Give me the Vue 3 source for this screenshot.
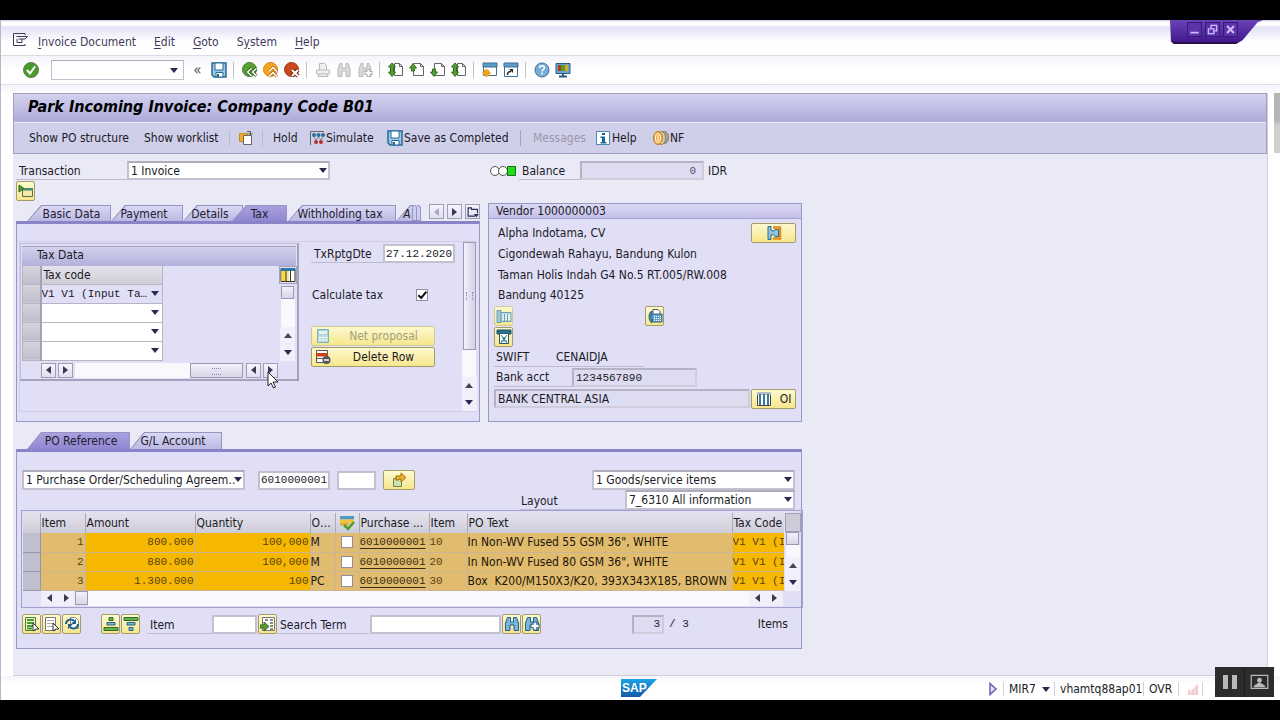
<script setup>
import { h, ref } from 'vue'

const art = {
  exit: '<path d="M12 3V1.500H.5v12H12V12" fill="none" stroke="#3c3950"/><path d="M3.500 4.500h11L12 7H5.500M4 7v3.500h5V7" fill="none" stroke="#3c3950"/>',
  ok: '<circle cx="8" cy="8" r="7.500" fill="#4d9a2c" stroke="#5e7a52"/><path d="M4 8l3 3.500L12 4.500" fill="none" stroke="#fff" stroke-width="2"/>',
  save: '<path d="M1 1h14v14H3l-2-2z" fill="#9cc6e4" stroke="#2a6a98" stroke-width="1.500"/><path d="M4 1h8v7H4z" fill="#fff" stroke="#2a6a98"/><path d="M5 10.500h7V15H5z" fill="#fff" stroke="#2a6a98"/><path d="M6 12h2v3H6z" fill="#2a6a98"/>',
  back: '<circle cx="7.500" cy="7.500" r="7" fill="#57a032" stroke="#467d2c"/><path d="M9.500 6.500l-4 3.500 4 4M14.500 6.500l-4 3.500 4 4" fill="none" stroke="#326020" stroke-width="3"/><path d="M9.500 6.500l-4 3.500 4 4M14.500 6.500l-4 3.500 4 4" fill="none" stroke="#fff" stroke-width="1.500"/>',
  up: '<circle cx="7.500" cy="7.500" r="7" fill="#f6a51c" stroke="#d0861c"/><path d="M6 9.500l4-4 4 4M6 14.500l4-4 4 4" fill="none" stroke="#b56a10" stroke-width="3"/><path d="M6 9.500l4-4 4 4M6 14.500l4-4 4 4" fill="none" stroke="#fff" stroke-width="1.500"/>',
  cancel: '<circle cx="7.500" cy="7.500" r="7" fill="#c9481c" stroke="#9c3d1e"/><path d="M8 8l6 6M14 8l-6 6" stroke="#7a260e" stroke-width="4"/><path d="M8 8l6 6M14 8l-6 6" stroke="#fff" stroke-width="2"/>',
  print: '<path d="M4.500 8V1.500h5l2 2V8M1.500 8h13v4h-13zM4 12l-1 2.500h10L12 12" fill="#f0f0f0" stroke="#b9b9b9"/>',
  findOff: '<path d="M2 14.500V7l2-5.500h2V6h4V1.500h2L14 7v7.500h-4V9H6v5.500z" fill="#d9d9d9" stroke="#b9b9b9"/>',
  findMoreOff: '<path d="M2 14.500V7l2-5.500h2V6h4V1.500h2L14 7v7.500h-4V9H6v5.500z" fill="#d9d9d9" stroke="#b9b9b9"/><path d="M11.500 7v8M7.500 11h8" stroke="#b0b0b0" stroke-width="4"/><path d="M11.500 8v6M8.500 11h6" stroke="#fff" stroke-width="2"/>',
  pageFirst: '<path d="M6.500 1.500h5l3 3v9h-8zM11.500 1.500v3h3" fill="#fff" stroke="#666"/><path d="M4 1l3.500 4H5.500v5h2L4 14.500.5 10h2V5h-2z" fill="#55a032" stroke="#346d20"/>',
  pagePrev: '<path d="M4.500 1.500h7l3 3v9h-10zM11.500 1.500v3h3" fill="#fff" stroke="#666"/><path d="M.5 6L4 1.500 7.500 6h-2v3h-3V6z" fill="#55a032" stroke="#346d20"/>',
  pageNext: '<path d="M4.500 1.500h7l3 3v9h-10zM11.500 1.500v3h3" fill="#fff" stroke="#666"/><path d="M.5 10L4 14.500 7.500 10h-2V7h-3v3z" fill="#55a032" stroke="#346d20"/>',
  session: '<path d="M1.500 1.500h13v12h-13z" fill="#fff" stroke="#3d6f96"/><path d="M1 1h14v4H1z" fill="#5d9cc8" stroke="#3d6f96"/><path d="M4.500 7v8M.5 11h8M2 8.500l5 5M7 8.500l-5 5" stroke="#f0a020" stroke-width="2"/>',
  shortcut: '<path d="M1.500 1.500h13v13h-13z" fill="#fff" stroke="#3d6f96"/><path d="M1 1h14v4H1z" fill="#5d9cc8" stroke="#3d6f96"/><path d="M4.500 13c0-3 1-3.500 3.500-3.500" fill="none" stroke="#222" stroke-width="1.500"/><path d="M6 7h4v4z" fill="#222"/>',
  help: '<circle cx="8" cy="8" r="7" fill="#78aed6" stroke="#3d6f96"/><path d="M5.500 6c0-3 5-3 5 0 0 1.500-2.500 1.500-2.500 3.500M8 10.500v2" fill="none" stroke="#fff" stroke-width="1.500"/>',
  monitor: '<path d="M1 1.500h14v10H1z" fill="#69a5cc" stroke="#2b5d84"/><path d="M3 3h3v6H3z" fill="#c43020"/><path d="M6 3h4v6H6z" fill="#4aa02c"/><path d="M10 3h3v6h-3z" fill="#e8a31c"/><path d="M8 12v2M4 14.500h8" stroke="#2b5d84" stroke-width="2"/>',
  otherDoc: '<path d="M1.500 3.500h8v8h-8z" fill="#f2ab22" stroke="#c78a1c"/><path d="M5.500 5.500h8v9h-8z" fill="#fff" stroke="#666"/><path d="M9 1.500h3.500V5M10.500 3l2 2 2-2" fill="none" stroke="#555"/>',
  simulate: '<path d="M1.500 15V1.500H15" fill="none" stroke="#666"/><g fill="#2b7098"><circle cx="5" cy="5" r="2"/><circle cx="9.500" cy="5" r="2"/><circle cx="14" cy="5" r="2"/></g><g fill="#b93226"><circle cx="7" cy="12" r="2"/><circle cx="12" cy="12" r="2"/></g><path d="M5 7l2 3 2.500-3M9.500 7l2.500 3 2-3" fill="none" stroke="#888"/>',
  info: '<path d="M1.500 1.500h13v13h-13z" fill="#fff" stroke="#4b89b5"/><path d="M7 3h3v2H7zM5.500 6.500H10V12h1.500v1.500h-6V12H7V8H5.500z" fill="#1b6597"/>',
  coins: '<ellipse cx="11.500" cy="7.500" rx="4" ry="6" fill="#a8a49a" stroke="#77736a"/><ellipse cx="8.500" cy="8" rx="4" ry="6.500" fill="#d9cfae" stroke="#8d7c4c"/><ellipse cx="5" cy="8" rx="4.500" ry="6.500" fill="#f3a93a" stroke="#c07f1c"/><ellipse cx="5" cy="8" rx="2.500" ry="4.500" fill="none" stroke="#fff"/><path d="M5 5v6" stroke="#fff"/>',
  lights: '<g stroke="#555" fill="#fff"><circle cx="5" cy="8" r="4.500"/><circle cx="13" cy="8" r="4.500"/></g><path d="M17.500 3.500h8v9h-8z" fill="#1be01b" stroke="#1c6a1c"/>',
  headerOpen: '<path d="M4.500 5.500h10v8h-10z" fill="#f4e9a8" stroke="#58704c"/><path d="M4 5h11v2.500H4z" fill="#46896f"/><path d="M1 2l5 3.500L1 9z" fill="#4f9a2e" stroke="#2e6b1c"/>',
  tabList: '<path d="M11 13.500H1.500v-11H6v2h8v5" fill="none" stroke="#2d2a55" stroke-width="1.500"/><path d="M9 10.500h7L12.500 15z" fill="#2d2a55"/>',
  config: '<path d="M1 1.500h14v13H1z" fill="#fff" stroke="#333"/><path d="M1.500 4H6v10H1.500z" fill="#ffd83c"/><path d="M6 4h3v10H6z" fill="#f4e58a"/><path d="M1 1h14v3H1z" fill="#2b78a5"/><path d="M6 4v10M10.500 4v10" stroke="#333"/>',
  calc: '<path d="M2.500 1.500h11v13h-11z" fill="#a9d0d8" stroke="#7eb0bd"/><path d="M4 3h8v3H4z" fill="#e9f6ee"/><path d="M5 7v7M8 7v7M11 7v7M3 9.500h10M3 12h10" stroke="#e9f6ee"/>',
  deleteRow: '<path d="M1.500 1.500h11v12h-11zM1 9.500h12" fill="#fff" stroke="#555"/><path d="M1 4h12v3.500H1z" fill="#c9431c"/><circle cx="11.500" cy="11" r="4" fill="#55565a"/><path d="M9 11h5" stroke="#fff" stroke-width="1.500"/>',
  relation: '<path d="M7 2.500h7v11H7" fill="none" stroke="#e28a1c" stroke-width="2.500"/><path d="M2 1.500h3v4l3 .5 1-1.500h3.500v7H9L7.500 9.500 5 10v4.500H2z" fill="#8ec3df" stroke="#2f6d92"/>',
  phone: '<path d="M1 2.500h4v12H1z" fill="#9ccbd8" stroke="#6d9eaf"/><path d="M5 4.500h10v9H5z" fill="#c2e0e6" stroke="#6d9eaf"/><path d="M7 7.500h7M7 9.500h7M7 11.500h7" stroke="#fff"/><path d="M8.500 6v7M11.500 6v7" stroke="#6d9eaf"/>',
  fax: '<path d="M6 6V1.500h5l2 2V6" fill="#fff" stroke="#555"/><path d="M4 6h11v8H6z" fill="#6ba5c9" stroke="#2c6285"/><path d="M5 3c-4 1-4 10 0 12V12c-2-2-2-4 0-6z" fill="#4f8fb8" stroke="#2c6285"/><path d="M7 8.500h7M7 10.500h7M7 12.500h7" stroke="#fff" stroke-dasharray="1 1"/>',
  bank: '<path d="M1 1h14v4H1z" fill="#2a7285" stroke="#184f60"/><path d="M3.500 4.500h9V14.500h-9z" fill="#fff" stroke="#27596d"/><path d="M5 6l6 8M11 6l-6 8M5 12h6" stroke="#3b8196"/><circle cx="8" cy="9.500" r="1.500" fill="#3b8196"/>',
  columns: '<path d="M1.500 1.500h13v13h-13z" fill="#fff" stroke="#444"/><path d="M1 1h14v3H1z" fill="#b5bcc4"/><path d="M4 3v11M8 3v11M12 3v11" stroke="#397a9c" stroke-width="2"/>',
  transfer: '<path d="M2.500 6.500h8v8h-8z" fill="#cfe0b0" stroke="#6d7d58"/><path d="M5 8V4h5V1l5 4.500L10 10V7H8v1z" fill="#f2b02c" stroke="#9b6d15"/>',
  rowsCheck: '<path d="M1 1h14v3.500H1z" fill="#4f99c4"/><path d="M1 4.500h14V8H1z" fill="#f2c33c"/><path d="M1 8h9v2.500H1z" fill="#d8b040"/><path d="M5 10l4 4 6-7" fill="none" stroke="#4e9b2e" stroke-width="2.500"/>',
  selectAll: '<path d="M1.500 1.500h10v13h-10z" fill="#e9f4d8" stroke="#4e7d3a"/><path d="M3 4h7M3 7h7M3 10h7M3 12.500h5" stroke="#4b9a2e" stroke-width="2"/><path d="M9 7l6 6h-3l-3 2z" fill="#fff" stroke="#333"/>',
  deselect: '<path d="M1.500 1.500h10v13h-10z" fill="#fff" stroke="#777"/><path d="M3 4.500h7M3 7.500h7M3 10.500h7" stroke="#aaa"/><path d="M9 7l6 6h-3l-3 2z" fill="#fff" stroke="#333"/>',
  refresh: '<path d="M6.500 1.500h5l3 3v8h-8z" fill="#fff" stroke="#888"/><path d="M2 8c0-4 5-6 8-3M14 8c0 4-5 6-8 3" fill="none" stroke="#235f8d" stroke-width="2"/><path d="M12 3v5H7zM4 13V8h5z" fill="#235f8d"/>',
  sortUp: '<path d="M6 1.500h4v3H6z" fill="#66b04a" stroke="#2e6c2c"/><path d="M4 6.500h8v2.500H4z" fill="#7cb6cf" stroke="#2c6285"/><path d="M1 11.500h14v3H1z" fill="#66b04a" stroke="#2e6c2c"/>',
  sortDown: '<path d="M1 1.500h14v3H1z" fill="#66b04a" stroke="#2e6c2c"/><path d="M4 6.500h8v2.500H4z" fill="#7cb6cf" stroke="#2c6285"/><path d="M6 11.500h4v3H6z" fill="#7cb6cf" stroke="#2c6285"/>',
  position: '<path d="M2.500 1.500h12v13h-12z" fill="#fff" stroke="#777"/><path d="M5 4h3M10 4h3M10 7h3M10 10h3M10 13h3" stroke="#666" stroke-width="1.500"/><path d="M0 9h4V6l5 4.500L4 15v-3H0z" fill="#55a032" stroke="#346d20"/>',
  find: '<path d="M1.500 14.500V7l2-5.500h3V6h3V1.500h3l2 5.500v7.500H10V9H6v5.500z" fill="#79b5dc" stroke="#235f8d"/>',
  findMore: '<path d="M1.500 14.500V7l2-5.500h3V6h3V1.500h3l2 5.500v7.500H10V9H6v5.500z" fill="#79b5dc" stroke="#235f8d"/><path d="M11 5.500v9M6.500 10h9" stroke="#235f8d" stroke-width="4.500"/><path d="M11 6.500v7M7.500 10h7" stroke="#fff" stroke-width="2.500"/>',
  play: '<path d="M5 2.500v11L11 8z" fill="#e4e0fa" stroke="#6a5fb8" stroke-width="1.500"/>',
  signal: '<path d="M3 14L14 2v12z" fill="#f5dade"/><path d="M5 14V8M9 14V9M13 14V5" stroke="#edb8be"/>',
  minimize: '<path d="M2 12.500h12" stroke="#cdbcff" stroke-width="2.500"/>',
  restore: '<path d="M2 7h8v7H2z" fill="none" stroke="#cdbcff" stroke-width="2"/><path d="M6 6V2h8v8h-3" fill="none" stroke="#cdbcff" stroke-width="2"/>',
  close: '<path d="M3 3l10 10M13 3L3 13" stroke="#cdbcff" stroke-width="3"/>',
  person: '<path d="M1 2h14v11H1z" fill="none" stroke="#bbb"/><circle cx="8" cy="6" r="2" fill="#bbb"/><path d="M3 12c1-3 3-2 4-4h2c1 2 3 1 4 4z" fill="#bbb"/>',
}

const Ico = (props) =>
  h('svg', {
    viewBox: props.wide ? '0 0 27 16' : '0 0 16 16',
    width: props.wide ? 27 : 16,
    height: 16,
    'aria-hidden': 'true',
    innerHTML: art[props.name],
  })
Ico.props = { name: String, wide: Boolean }

const menus = ['Invoice Document', 'Edit', 'Goto', 'System', 'Help'].map((t) => {
  const i = t === 'System' ? 1 : 0
  return { pre: t.slice(0, i), key: t[i], post: t.slice(i + 1), name: t }
})
const tools = [
  ['save'],
  ['back', 'up', 'cancel'],
  ['print', 'findOff', 'findMoreOff'],
  ['pageFirst', 'pagePrev', 'pageNext', 'pageFirst'],
  ['session', 'shortcut'],
  ['help', 'monitor'],
]
const tabs = [
  { t: 'Basic Data', c: 'w84' },
  { t: 'Payment', c: 'w72' },
  { t: 'Details', c: 'w60' },
  { t: 'Tax', c: 'w55' },
  { t: 'Withholding tax', c: 'w108' },
]
const tab = ref('Tax')
const address = [
  'Alpha Indotama, CV',
  'Cigondewah Rahayu, Bandung Kulon',
  'Taman Holis Indah G4 No.5 RT.005/RW.008',
  'Bandung 40125',
]
const items = [
  { n: 1, amount: '800.000', qty: '100,000', u: 'M', po: '6010000001', line: '10', text: 'In Non-WV Fused 55 GSM 36", WHITE' },
  { n: 2, amount: '880.000', qty: '100,000', u: 'M', po: '6010000001', line: '20', text: 'In Non-WV Fused 80 GSM 36", WHITE' },
  { n: 3, amount: '1.300.000', qty: '100', u: 'PC', po: '6010000001', line: '30', text: 'Box  K200/M150X3/K20, 393X343X185, BROWN' },
]
</script>

<template>
  <div class="screen">
    <div class="window">
      <div class="caption">
        <button aria-label="Minimize"><Ico name="minimize" /></button>
        <button aria-label="Restore"><Ico name="restore" /></button>
        <button aria-label="Close"><Ico name="close" /></button>
      </div>

      <nav class="menubar">
        <button class="flat sysmenu" aria-label="System menu"><Ico name="exit" /></button>
        <button v-for="m in menus" :key="m.name" class="flat menu">{{ m.pre }}<u>{{ m.key }}</u>{{ m.post }}</button>
      </nav>

      <div class="toolbar">
        <button class="flat" aria-label="Enter"><Ico name="ok" /></button>
        <span class="combo command"><input aria-label="Command" /><i class="tri down"></i></span>
        <button class="flat chevrons" aria-label="Hide command field">«</button>
        <div v-for="(g, i) in tools" :key="i" class="group">
          <button v-for="(n, j) in g" :key="j" class="flat" :aria-label="n"><Ico :name="n" /></button>
        </div>
      </div>

      <div class="body">
        <main class="frame">
          <header class="head">
            <h1>Park Incoming Invoice: Company Code B01</h1>
            <div class="appbar">
              <button class="flat a1">Show PO structure</button>
              <button class="flat a2">Show worklist</button>
              <button class="flat a3" aria-label="Other document"><Ico name="otherDoc" /></button>
              <button class="flat a4">Hold</button>
              <button class="flat a5"><Ico name="simulate" />Simulate</button>
              <button class="flat a6"><Ico name="save" />Save as Completed</button>
              <button class="flat a7" disabled>Messages</button>
              <button class="flat a8"><Ico name="info" />Help</button>
              <button class="flat"><Ico name="coins" />NF</button>
            </div>
          </header>

          <div class="content">
            <div class="transaction">
              <label for="trx" class="ul trx">Transaction</label>
              <span class="combo trxsel"><select id="trx"><option>1 Invoice</option></select><i class="tri down"></i></span>
              <Ico name="lights" wide class="lights" />
              <label for="bal" class="ul bal">Balance</label>
              <input id="bal" class="ro mono right balval" value="0" readonly />
              <span>IDR</span>
            </div>
            <button class="gold sq" aria-label="Open header"><Ico name="headerOpen" /></button>

            <div class="top">
              <section class="left">
                <div class="tabs">
                  <button v-for="t in tabs" :key="t.t" class="tab" :class="[t.c, { on: tab === t.t }]" @click="tab = t.t">
                    <span>{{ t.t }}</span>
                  </button>
                  <button class="tab w17" aria-label="Amount split"><span><em>A</em></span></button>
                  <i class="stack"></i><i class="stack"></i>
                  <div class="tabnav">
                    <button class="box" disabled aria-label="Previous tab"><i class="tri prev dim"></i></button>
                    <button class="box" aria-label="Next tab"><i class="tri next"></i></button>
                    <button class="box" aria-label="Tab list"><Ico name="tabList" /></button>
                  </div>
                </div>
                <div class="panel taxpanel">
                  <div class="inner">
                    <div class="taxbox">
                      <h2>Tax Data</h2>
                      <div class="taxgrid">
                        <table>
                          <thead>
                            <tr><th class="sel"></th><th>Tax code</th></tr>
                          </thead>
                          <tbody>
                            <tr v-for="n in 4" :key="n">
                              <td class="sel"></td>
                              <td :class="{ filled: n === 1 }">
                                <span class="cellsel"><select :aria-label="'Tax code ' + n"><option>{{ n === 1 ? 'V1 V1 (Input Ta…' : '' }}</option></select><i class="tri down"></i></span>
                              </td>
                            </tr>
                          </tbody>
                        </table>
                        <div class="vs">
                          <button class="cfg" aria-label="Configure table"><Ico name="config" /></button>
                          <i class="thumb"></i><i class="track"></i>
                          <button class="arr" aria-label="Scroll up"><i class="tri up"></i></button>
                          <button class="arr" aria-label="Scroll down"><i class="tri down"></i></button>
                        </div>
                      </div>
                      <div class="hs">
                        <button class="box" aria-label="First column"><i class="tri prev"></i></button>
                        <button class="box" aria-label="Right one column"><i class="tri next"></i></button>
                        <i class="track"></i><i class="thumb grip"></i>
                        <button class="box" aria-label="Left one column"><i class="tri prev"></i></button>
                        <button class="box" aria-label="Last column"><i class="tri next"></i></button>
                      </div>
                      <svg class="pointer" viewBox="0 0 12 18" width="12" height="18" aria-hidden="true"><path d="M1 1v14l3-3 2.500 5 2-1-2.500-5H11z" fill="#fff" stroke="#222" /></svg>
                    </div>
                    <div class="taxform">
                      <div class="line"><label for="dte" class="ul">TxRptgDte</label><input id="dte" class="field mono" value="27.12.2020" /></div>
                      <div class="calc"><label for="calc">Calculate tax</label><input id="calc" type="checkbox" class="chk" checked /></div>
                      <button class="gold wide" disabled><Ico name="calc" /><span>Net proposal</span></button>
                      <button class="gold wide"><Ico name="deleteRow" /><span>Delete Row</span></button>
                    </div>
                    <div class="pscroll">
                      <i class="thumb"></i><i class="track"></i>
                      <button class="arr" aria-label="Scroll up"><i class="tri up"></i></button>
                      <button class="arr" aria-label="Scroll down"><i class="tri down"></i></button>
                    </div>
                  </div>
                </div>
              </section>

              <section class="vendor">
                <h2>Vendor 1000000003</h2>
                <div class="vbody">
                  <div class="vrow"><span class="adr">{{ address[0] }}</span><button class="gold vbtn" aria-label="Vendor details"><Ico name="relation" /></button></div>
                  <div v-for="a in address.slice(1)" :key="a" class="vrow"><span class="adr">{{ a }}</span></div>
                  <div class="vrow phones">
                    <button class="gold sq" disabled aria-label="Phone"><Ico name="phone" /></button>
                    <button class="gold sq" aria-label="Fax"><Ico name="fax" /></button>
                  </div>
                  <div class="vrow"><button class="gold sq" aria-label="Bank details"><Ico name="bank" /></button></div>
                  <div class="vrow"><div class="ul swift"><span>SWIFT</span><span>CENAIDJA</span></div></div>
                  <div class="vrow"><label for="acct" class="ul acct">Bank acct</label><input id="acct" class="ro mono acctv" value="1234567890" readonly /></div>
                  <div class="vrow"><input class="ro grow" aria-label="Bank name" value="BANK CENTRAL ASIA" readonly /><button class="gold vbtn oi"><Ico name="columns" />OI</button></div>
                </div>
              </section>
            </div>

            <section class="po">
              <div class="tabs">
                <button class="tab on w103"><span>PO Reference</span></button>
                <button class="tab w92"><span>G/L Account</span></button>
              </div>
              <div class="panel popanel">
                <div class="refs">
                  <span class="combo w222"><select aria-label="Reference type"><option>1 Purchase Order/Scheduling Agreem…</option></select><i class="tri down"></i></span>
                  <input class="field mono w72i" aria-label="Purchase order" value="6010000001" />
                  <input class="field mono w39i" aria-label="Purchase order item" />
                  <button class="gold go" aria-label="Assign"><Ico name="transfer" /></button>
                  <span class="combo w202"><select aria-label="Item kind"><option>1 Goods/service items</option></select><i class="tri down"></i></span>
                </div>
                <div class="layout">
                  <label for="lay" class="ul">Layout</label>
                  <span class="combo w169"><select id="lay"><option>7_6310 All information</option></select><i class="tri down"></i></span>
                </div>

                <div class="gridbox">
                  <div class="gridtop">
                    <table class="grid">
                      <colgroup><col class="c0" /><col class="c1" /><col class="c2" /><col class="c3" /><col class="c4" /><col class="c5" /><col class="c6" /><col class="c7" /><col /><col class="c9" /></colgroup>
                      <thead>
                        <tr><th></th><th>Item</th><th>Amount</th><th>Quantity</th><th>O…</th><th class="ic"><Ico name="rowsCheck" /></th><th>Purchase ...</th><th>Item</th><th>PO Text</th><th>Tax Code</th></tr>
                      </thead>
                      <tbody>
                        <tr v-for="r in items" :key="r.n">
                          <td class="sel"></td>
                          <td class="mono right">{{ r.n }}</td>
                          <td class="mono right hot">{{ r.amount }}</td>
                          <td class="mono right hot">{{ r.qty }}</td>
                          <td class="unit">{{ r.u }}</td>
                          <td class="ic"><input type="checkbox" class="chk" :aria-label="'Booking OK ' + r.n" /></td>
                          <td class="mono"><a href="#">{{ r.po }}</a></td>
                          <td class="mono">{{ r.line }}</td>
                          <td class="txt">{{ r.text }}</td>
                          <td class="mono hot code">V1 V1 (I</td>
                        </tr>
                      </tbody>
                    </table>
                    <div class="vs gvs">
                      <i class="corner"></i><i class="thumb"></i><i class="track"></i>
                      <button class="arr" aria-label="Scroll up"><i class="tri up"></i></button>
                      <button class="arr" aria-label="Scroll down"><i class="tri down"></i></button>
                    </div>
                  </div>
                  <div class="hs ghs">
                    <button class="arr" aria-label="Scroll left"><i class="tri prev"></i></button>
                    <button class="arr" aria-label="Scroll right"><i class="tri next"></i></button>
                    <i class="thumb"></i><i class="track"></i>
                    <button class="arr" aria-label="Column left"><i class="tri prev"></i></button>
                    <button class="arr" aria-label="Column right"><i class="tri next"></i></button>
                  </div>
                </div>

                <div class="actions">
                  <button class="gold sq" aria-label="Select all"><Ico name="selectAll" /></button>
                  <button class="gold sq" aria-label="Deselect all"><Ico name="deselect" /></button>
                  <button class="gold sq" aria-label="Refresh"><Ico name="refresh" /></button>
                  <button class="gold sq gap" aria-label="Sort ascending"><Ico name="sortUp" /></button>
                  <button class="gold sq" aria-label="Sort descending"><Ico name="sortDown" /></button>
                  <label for="itm" class="ul l1">Item</label><input id="itm" class="field w45" />
                  <button class="gold sq" aria-label="Position"><Ico name="position" /></button>
                  <label for="term" class="ul l2">Search Term</label><input id="term" class="field w130" />
                  <button class="gold sq" aria-label="Find"><Ico name="find" /></button>
                  <button class="gold sq" aria-label="Find next"><Ico name="findMore" /></button>
                  <input class="ro mono right cnt" aria-label="Shown items" value="3" readonly /><span class="mono of">/ 3</span>
                  <span class="itemsword">Items</span>
                </div>
              </div>
            </section>
          </div>
        </main>
        <aside class="edge"></aside>
      </div>

      <footer class="status">
        <svg class="logo" viewBox="0 0 36 18" width="36" height="18" role="img" aria-label="SAP">
          <defs><linearGradient id="sapblue" x1="0" y1="0" x2="0" y2="1"><stop offset="0" stop-color="#1ba3e6" /><stop offset="1" stop-color="#1459a8" /></linearGradient></defs>
          <path d="M0 0h36L19 18H0z" fill="url(#sapblue)" />
          <text x="1" y="13" font-family="Liberation Sans" font-size="12" font-weight="700" fill="#fff">SAP</text>
        </svg>
        <div class="info">
          <Ico name="play" />
          <span class="s1">MIR7 <i class="tri down"></i></span>
          <span class="s2">vhamtq88ap01</span>
          <span class="s3">OVR</span>
          <span class="s4"><Ico name="signal" /></span>
          <span class="s5"></span>
        </div>
      </footer>
      <div class="player">
        <button aria-label="Pause"><i></i><i></i></button>
        <button aria-label="Presenter"><Ico name="person" /></button>
      </div>
    </div>
  </div>
</template>

<style>
body { background: #000; }
</style>

<style scoped>
* { box-sizing: border-box; }
.screen {
  min-height: 100vh; padding: 20px 0; background: #000; display: flex; flex-direction: column;
  font: 12px/16px "DejaVu Sans Condensed", "DejaVu Sans", sans-serif; color: #1a1a26;
}
button, input, select { font: inherit; color: inherit; margin: 0; padding: 0; border-radius: 0; }
svg { display: block; flex: none; }
h1, h2 { margin: 0; font-size: 12px; font-weight: 400; }
i { display: block; flex: none; }
.window {
  flex: 1; position: relative; display: flex; flex-direction: column;
  background: #fff; border-left: 1px solid #b9b7cc;
}
.flat { border: 0; background: none; display: flex; align-items: center; white-space: nowrap; }
input.mono, .mono { font-family: "Liberation Mono", monospace; font-size: 11px; }
.right { text-align: right; }

.tri { width: 0; height: 0; border: 4px solid transparent; }
.tri.down { border-top: 5px solid #2b2853; border-bottom: 0; }
.tri.up { border-bottom: 5px solid #45435c; border-top: 0; }
.tri.prev { border-right: 5px solid #3a3852; border-left: 0; }
.tri.next { border-left: 5px solid #3a3852; border-right: 0; }
.tri.dim { border-right-color: #a9a7bf; }

.caption {
  position: absolute; top: 0; right: 17px; width: 93px; height: 24px; padding: 0 0 4px 17px;
  display: flex; gap: 3px; align-items: center;
  background: linear-gradient(#6a43b8, #42198c); border-bottom: 2px solid #241046;
  clip-path: polygon(0 0, 100% 0, 94% 10%, 78% 84%, 71% 100%, 4% 100%, 1% 90%);
}
.caption button { width: 15px; height: 15px; border: 1px solid #38177a; background: #5a33a6; display: grid; place-items: center; }
.caption svg { width: 11px; height: 11px; }

.menubar {
  height: 36px; padding: 8px 0 0 12px; display: flex; align-items: center; gap: 18px;
  background: linear-gradient(#c9c5e6 0, #fff 2px, #fff 5px, #e4e1f6 7px, #fff 22px);
  border-bottom: 1px solid #dcdce2; color: #3f3a5e;
}
.sysmenu { margin: 0 -9px 4px 0; }
.menubar u { text-underline-offset: 2px; }
.toolbar {
  height: 29px; padding-left: 22px; display: flex; align-items: center;
  background: linear-gradient(#f4f4fb, #fff 14px); border-bottom: 1px solid #dcdce2;
}
.combo { position: relative; display: block; flex: none; height: 20px; background: #fff; border: 2px solid #c3c1cf; border-top-color: #aeadba; }
.combo select, .combo input {
  appearance: none; display: block; width: 100%; height: 100%; border: 0; background: transparent; padding: 0 7px 0 2px; outline: 0; white-space: pre; line-height: 16px;
}
.combo .tri { position: absolute; right: 1px; top: 5px; pointer-events: none; }
.command { width: 133px; margin-left: 12px; border-width: 1px; }
.command .tri { top: 7px; right: 5px; }
.chevrons { width: 27px; justify-content: center; font-size: 15px; color: #555; }
.group { display: flex; gap: 5px; padding-right: 6px; }
.group + .group { border-left: 1px solid #bfbfc8; padding-left: 8px; }

.body { flex: 1; display: flex; padding: 8px 0 0 12px; background: linear-gradient(#f3f3fa, #fff 10px); }
.frame { flex: 1; min-width: 0; background: #eaeaf7; border-right: 1px solid #d0cfdd; border-bottom: 1px solid #cfcedb; }
.edge { width: 6px; height: 60px; margin-left: 6px; background: linear-gradient(#b5b5b5, #b5b5b5 45%, #cfcfcf 55%, #cfcfcf); }
.head { border: 1px solid #a19fc0; background: #d0cfe9; }
.head h1 {
  height: 29px; padding: 0 14px; font: italic 700 16px/26px "DejaVu Sans Condensed", "DejaVu Sans", sans-serif; color: #000;
  background: linear-gradient(#d3d1ee, #aeabdc); border-bottom: 1px solid #f0effc;
}
.appbar { height: 30px; padding-left: 15px; display: flex; align-items: center; }
.appbar svg { margin-right: 1px; }
.appbar button:disabled { color: #9a98aa; }
.a1 { width: 115px; } .a2 { width: 85px; } .a3 { width: 34px; padding-left: 8px; border-left: 1px solid #bbb9d0; border-right: 1px solid #bbb9d0; }
.a4 { margin-left: 10px; width: 36px; } .a5 { width: 78px; } .a6 { width: 133px; }
.a7 { width: 75px; padding-left: 12px; border-left: 1px solid #a5a3bb; margin-right: 0; } .a8 { width: 58px; }

.content { padding: 7px 3px 10px; }
.ul { border-bottom: 1px solid #bdbccb; }
.transaction { display: flex; align-items: center; height: 19px; margin-bottom: 1px; }
.transaction .ul, .line .ul, .layout .ul, .actions .ul { height: 19px; line-height: 20px; padding-left: 3px; }
.trx { width: 111px; } .trxsel { width: 203px; height: 19px; }
.lights { margin: 0 2px 0 160px; }
.transaction .bal { width: 61px; padding-left: 3px; }
.ro {
  height: 19px; border: 2px solid #b4b2c4; border-right-color: #cfcddc; border-bottom-color: #cfcddc;
  background: #dedcf0; padding: 0 2px; outline: 0; min-width: 0;
}
.balval { width: 124px; padding-right: 6px; margin-right: 4px; color: #55536a; }
.field { height: 19px; border: 2px solid #c3c1cf; background: #fff; padding: 0 0 0 1px; outline: 0; min-width: 0; }
.gold {
  border: 1px solid #a39b68; border-radius: 2px; height: 20px; flex: none;
  background: linear-gradient(#fdf9cf, #f6e78c); display: flex; align-items: center; justify-content: center;
}
.gold:disabled { color: #a39f85; border-color: #cfc99e; }
.sq { width: 19px; }
.top { display: flex; gap: 8px; margin-top: 3px; align-items: stretch; }
.left { width: 464px; }
.tabs { height: 17px; padding-left: 11px; display: flex; align-items: stretch; }
.left .tabs { padding-top: 1px; }
.tab {
  position: relative; border: 0; background: #9794c2; flex: none; padding: 0; z-index: 0;
  clip-path: polygon(0 100%, 14px 0, 100% 0, 100% 100%); color: #22202f;
}
.tab::before {
  content: ""; position: absolute; inset: 1px 1px 0 1px; z-index: -1;
  background: linear-gradient(#dad8f3, #bbb8e3); clip-path: polygon(0 100%, 14px 0, 100% 0, 100% 100%);
}
.tab.on::before { background: linear-gradient(#a8a0df, #9187d3); }
.tab span { display: block; padding-left: 5px; line-height: 18px; white-space: nowrap; }
.w84 { width: 84px; } .w72 { width: 72px; } .w60 { width: 60px; } .w55 { width: 55px; margin-left: -10px; margin-right: 1px; }
.w60 { margin-right: -1px; }
.w60 span { padding: 0 6px 0 0; }
.w72 span { padding: 0 6px 0 0; }
.w55 span { padding-left: 0; }
.w108 { width: 108px; } .w108 span { padding: 0 4px 0 0; } .w17 { width: 17px; } .w103 { width: 103px; } .w92 { width: 92px; }
.w92 span { padding: 0 6px 0 0; }
.stack { width: 4px; border: 1px solid #9794c2; border-left: 0; background: #d0cdee; border-top-right-radius: 3px; }
.tabnav { margin-left: auto; display: flex; gap: 3px; height: 15px; margin-top: -1px; }
.box { width: 15px; height: 15px; border: 1px solid #a09eb6; background: linear-gradient(#f6f5fd, #e0dff0); display: grid; place-items: center; }
.box svg { width: 12px; height: 12px; }
.panel { background: #e1dff5; border: 1px solid #9a97c6; border-top: 3px solid #8b83c8; }
.taxpanel { height: 201px; padding: 17px 2px 9px; }
.inner { height: 171px; border: 1px solid #d0cee4; border-right: 0; display: flex; }
.taxbox { position: relative; width: 279px; height: 138px; border: 1px solid #c2c0d8; border-right: 2px solid #a4a2be; border-bottom: 2px solid #a4a2be; margin-top: 1px; padding: 2px 1px 0; }
.taxbox h2 { height: 20px; padding-left: 15px; line-height: 17px; border-top: 1px solid #a4a2be; background: linear-gradient(#d3d1ec, #b3b0dc); }
.taxgrid { display: flex; justify-content: space-between; }
table { border-collapse: collapse; table-layout: fixed; }
th { font-weight: 400; text-align: left; }
.taxgrid table { width: 141px; }
.taxgrid th { height: 18px; padding: 0 2px; background: linear-gradient(#e4e3ea, #cfced8); border: 1px solid #b7b5c4; border-top: 0; line-height: 16px; }
.taxgrid .sel { width: 18px; background: linear-gradient(#d6d5de, #bebdca); border-right: 2px solid #a3a1b4; }
.taxgrid td { height: 19px; padding: 0; background: #fff; border: 1px solid #b7b5c4; }
.taxgrid td.filled { background: #e1dff5; }
.cellsel { position: relative; display: block; height: 18px; font: 11px/16px "Liberation Mono", monospace; }
.cellsel select { appearance: none; border: 0; background: transparent; width: 100%; height: 100%; padding: 0; display: block; }
.cellsel .tri { position: absolute; right: 3px; top: 6px; pointer-events: none; }
.vs { width: 17px; display: flex; flex-direction: column; align-items: center; }
.cfg { width: 18px; height: 18px; border: 1px solid #a3a1b4; background: #e4e2f2; display: grid; place-items: center; margin-bottom: 2px; }
.thumb { background: linear-gradient(#f2f1fb, #d8d6e8); border: 1px solid #9c9ab3; }
.vs .thumb { width: 13px; height: 13px; }
.track { background: #f8f8fd; flex: 1; }
.vs .track { width: 14px; }
.arr { border: 0; width: 15px; height: 17px; background: #f0effa; display: grid; place-items: center; flex: none; }
.hs { display: flex; align-items: center; height: 19px; }
.taxbox .hs { padding: 0 18px 0 19px; gap: 2px; }
.hs .track { height: 15px; }
.taxbox .hs .grip { width: 53px; height: 15px; margin: 0 1px 0 -2px; }
.grip::after { content: ""; display: block; width: 9px; height: 5px; margin: 4px auto; border-top: 1px dotted #8886a0; border-bottom: 1px dotted #8886a0; }
.pointer { position: absolute; left: 246px; bottom: -10px; }
.taxform { width: 124px; margin-left: 12px; display: flex; flex-direction: column; padding-top: 2px; }
.line { display: flex; width: 144px; } .line .ul { width: 72px; } .line .field { width: 72px; }
.calc { height: 20px; margin: 22px 0 21px; padding-left: 1px; display: flex; align-items: center; justify-content: space-between; padding-right: 7px; }
.chk { appearance: none; display: grid; place-items: center; width: 12px; height: 12px; background: #fff; border: 1px solid #8f8da4; }
.chk:checked::after { content: ""; width: 7px; height: 3px; border: solid #111; border-width: 0 0 2px 2px; transform: rotate(-50deg) translate(1px, -1px); }
.wide { width: 124px; margin-bottom: 1px; justify-content: flex-start; padding-left: 3px; }
.wide span { flex: 1; text-align: center; padding-left: 2px; }
.pscroll { width: 14px; margin-left: auto; margin-right: 1px; display: flex; flex-direction: column; align-items: center; }
.pscroll .thumb { width: 13px; height: 108px; background: linear-gradient(90deg, #f2f1fb, #d3d1e6); display: grid; place-items: center; }
.pscroll .thumb::after { content: ""; width: 5px; height: 8px; border-left: 1px dotted #8886a0; border-right: 1px dotted #8886a0; }
.pscroll .track { width: 14px; }

.vendor { width: 314px; border: 1px solid #9a97c6; background: #e1dff5; height: 219px; margin-top: -1px; }
.vendor h2 { height: 15px; line-height: 14px; padding-left: 7px; background: linear-gradient(#dcd9f5, #c3bfe8); border-bottom: 1px solid #a6a2d0; }
.vbody { display: grid; grid-template-rows: repeat(9, 1fr); height: 186px; padding: 0 5px; margin-top: 4px; }
.vrow { display: flex; align-items: center; }
.adr { flex: 1; padding-left: 4px; }
.vbtn { width: 45px; }
.phones { gap: 132px; }
.swift { display: flex; width: 150px; padding-left: 2px; line-height: 18px; }
.swift span:first-child { width: 60px; }
.acct { width: 78px; padding-left: 2px; line-height: 18px; }
.acctv { width: 125px; }
.grow { flex: 1; margin-right: 1px; }
.oi { gap: 8px; }

.po { width: 786px; margin-top: 10px; }
.popanel { height: 200px; padding: 18px 0 0; }
.refs { display: flex; height: 20px; padding: 0 6px 0 5px; align-items: center; }
.w222 { width: 223px; margin-right: 13px; } .w72i { width: 72px; margin-right: 7px; } .w39i { width: 39px; margin-right: 7px; }
.go { width: 32px; } .w202 { width: 203px; margin-left: auto; }
.layout { display: flex; justify-content: flex-end; height: 20px; padding-right: 6px; }
.layout .ul { width: 105px; padding-left: 1px; line-height: 22px; height: 20px; } .w169 { width: 170px; }
.gridbox { margin: 0 -2px 0 4px; border: 1px solid #a3a0cd; height: 98px; padding: 2px 1px 0; }
.gridtop { display: flex; }
.grid { flex: 1; width: 100%; }
.c0 { width: 17px; } .c1 { width: 45px; } .c2 { width: 110px; } .c3 { width: 115px; } .c4 { width: 25px; } .c5 { width: 24px; }
.c6 { width: 70px; } .c7 { width: 38px; } .c9 { width: 52px; }
.grid th { height: 20px; padding: 0 1px; overflow: hidden; white-space: nowrap; background: linear-gradient(#e4e3ec, #cccbd8); border-right: 1px solid #a9a7bb; }
.grid th:last-child { border-right: 0; }
.grid td { height: 19px; padding: 0 1px 0 0; overflow: hidden; white-space: pre; background: #e1bc6e; border-bottom: 1px solid #ccb595; border-right: 1px solid #ccb595; line-height: 16px; color: #5a4210; }
.grid td.hot { background: #f6b800; }
.grid td.code { padding: 0; border-right: 0; }
.grid td.sel { background: #c0bfce; border-color: #9796ad; }
.grid td.unit, .grid td.txt { color: #1c1408; }
.grid .ic svg, .grid .ic input { margin: 0 auto; }
.grid a { color: #3a2c10; text-decoration: underline; text-underline-offset: 3px; }
.gvs .corner { width: 16px; height: 19px; background: #cccbd8; border: 1px solid #a3a1b4; }
.ghs { padding: 0 18px 0 18px; height: 15px; }
.ghs .thumb { width: 13px; height: 14px; }
.ghs .arr { width: 17px; height: 15px; }
.actions { display: flex; align-items: center; margin-top: 6px; padding-left: 5px; gap: 1px; }
.gap { margin-left: 19px; }
.l1 { width: 65px; margin-left: 6px; } .w45 { width: 45px; margin-left: -1px; }
.l2 { width: 92px; margin-left: -1px; } .w130 { width: 131px; }
.cnt { width: 32px; margin-left: 90px; } .of { margin-left: 4px; }
.itemsword { margin-left: auto; padding-right: 13px; }

.status { height: 24px; position: relative; display: flex; align-items: center; justify-content: flex-end; background: linear-gradient(#f5f5fa, #fff 8px); }
.logo { position: absolute; left: 0; right: 4px; top: 3px; margin: 0 auto; }
.info { display: flex; align-items: center; height: 16px; margin: 2px 72px 0 0; }
.info span { border-left: 1px solid #cfcfd6; height: 14px; line-height: 15px; padding-left: 5px; display: flex; align-items: center; }
.info > svg { margin-right: 2px; }
.s1 { width: 51px; gap: 6px; } .s2 { width: 89px; } .s3 { width: 35px; } .s4 { width: 24px; }
.player { position: absolute; right: 6px; bottom: 3px; display: flex; width: 59px; height: 30px; background: #2c2c2e; }
.player button { flex: 1; border: 0; background: none; display: flex; gap: 4px; align-items: center; justify-content: center; }
.player button + button { border-left: 1px solid #1c1c1e; }
.player i { width: 5px; height: 14px; background: #b9b9b9; }
.player svg { width: 19px; height: 19px; }
</style>
